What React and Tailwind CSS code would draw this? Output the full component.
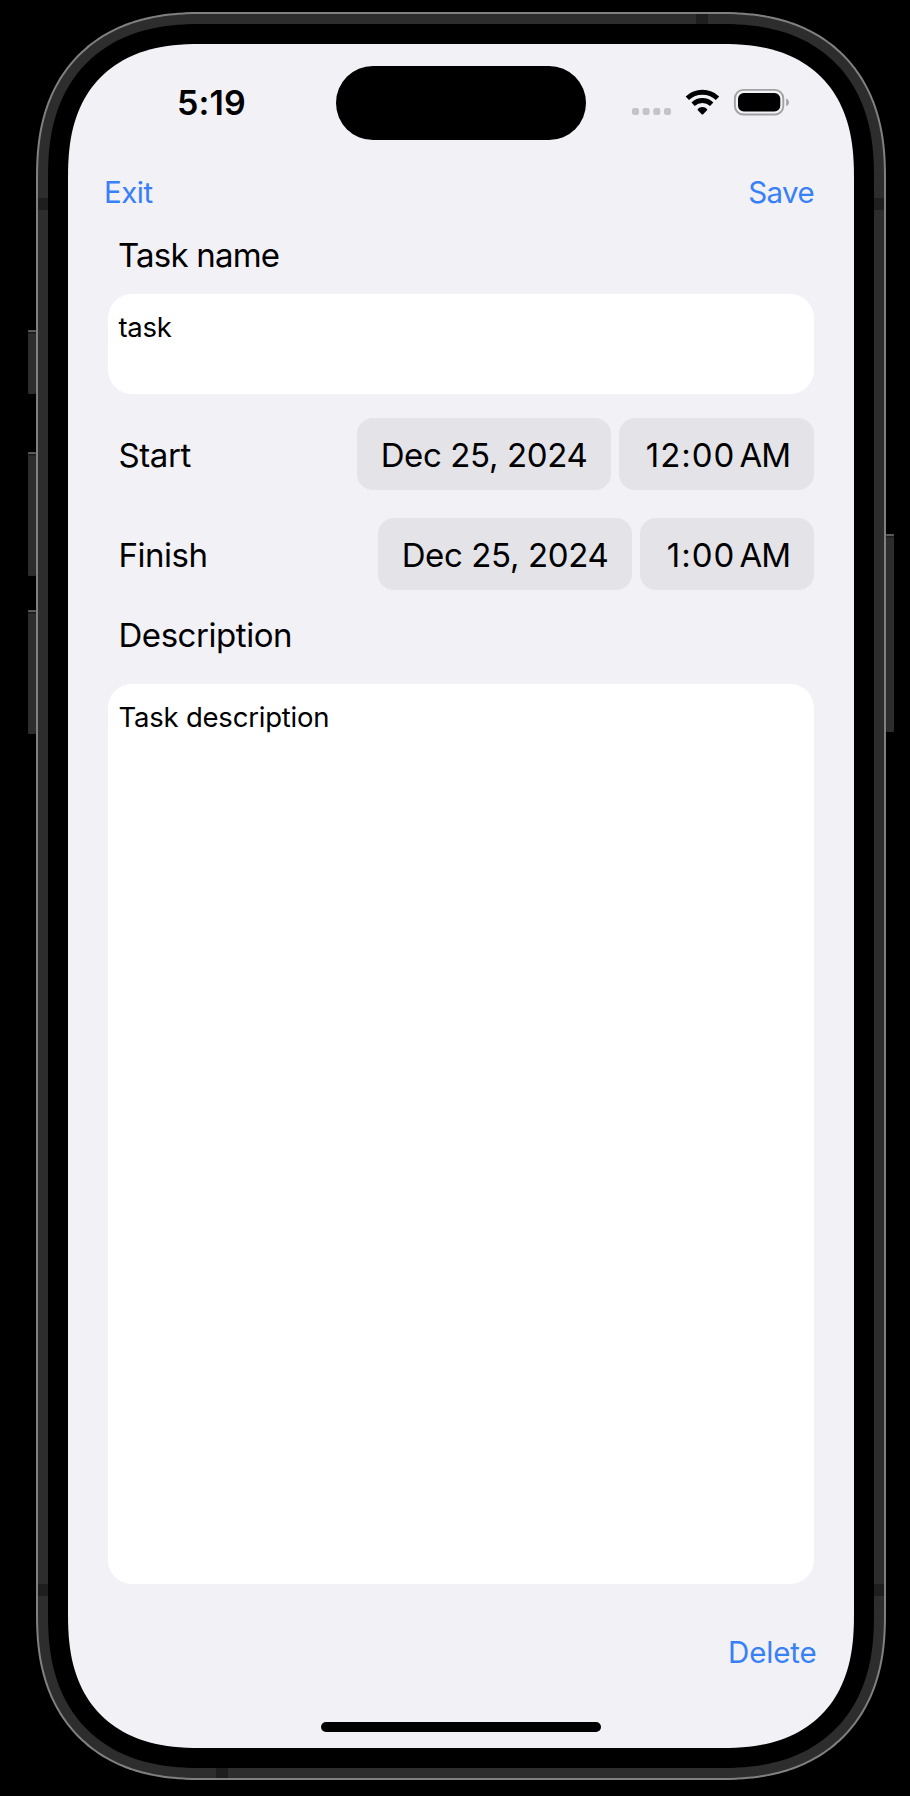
const CORNER_EXTENT = 136;
const CORNER_EXPONENT = 2.5;
const CORNER_STEPS = 40;

// Rectangle outline whose corners follow a superellipse.
function smoothRect(x, y, w, h) {
  const cx = [x + w - CORNER_EXTENT, x + w - CORNER_EXTENT, x + CORNER_EXTENT, x + CORNER_EXTENT];
  const cy = [y + CORNER_EXTENT, y + h - CORNER_EXTENT, y + h - CORNER_EXTENT, y + CORNER_EXTENT];
  const points = [];
  for (let q = 0; q < 4; q++) {
    for (let i = 0; i <= CORNER_STEPS; i++) {
      const t = (i / CORNER_STEPS) * (Math.PI / 2);
      const major = CORNER_EXTENT * Math.pow(Math.abs(Math.cos(t)), 2 / CORNER_EXPONENT);
      const minor = CORNER_EXTENT * Math.pow(Math.abs(Math.sin(t)), 2 / CORNER_EXPONENT);
      const [dx, dy] = [
        [minor, -major],
        [major, minor],
        [-minor, major],
        [-major, -minor],
      ][q];
      points.push(`${(cx[q] + dx).toFixed(2)} ${(cy[q] + dy).toFixed(2)}`);
    }
  }
  return `M${points.join("L")}Z`;
}

const screenOutline = smoothRect(68, 44, 786, 1704);

const sideButtons = [
  { x: 28, y: 330, h: 64 },
  { x: 28, y: 452, h: 124 },
  { x: 28, y: 610, h: 124 },
  { x: 886, y: 534, h: 198 },
];

const antennaBands = [
  { x: 38, y: 198, w: 10, h: 12 },
  { x: 874, y: 198, w: 10, h: 12 },
  { x: 38, y: 1584, w: 10, h: 12 },
  { x: 874, y: 1584, w: 10, h: 12 },
  { x: 696, y: 14, w: 12, h: 10 },
  { x: 216, y: 1768, w: 12, h: 10 },
];

function DeviceFrame() {
  return (
    <svg className="absolute inset-0" width="910" height="1796" viewBox="0 0 910 1796" aria-hidden="true">
      {sideButtons.map((b) => (
        <g key={`${b.x}-${b.y}`}>
          <rect x={b.x} y={b.y} width="8" height={b.h} rx="1.5" fill="#2d2d2d" />
          <rect x={b.x} y={b.y} width="8" height="2" rx="1" fill="#5c5c5c" />
          <rect x={b.x} y={b.y + 2} width="8" height="1.5" fill="#1c1c1c" />
        </g>
      ))}
      <g strokeLinejoin="round">
        <path d={screenOutline} fill="none" stroke="#808080" strokeWidth="64" />
        <path d={screenOutline} fill="none" stroke="#2d2d2d" strokeWidth="60" />
        {antennaBands.map((b) => (
          <rect key={`${b.x}-${b.y}`} x={b.x} y={b.y} width={b.w} height={b.h} fill="#1e1e1e" />
        ))}
        <path d={screenOutline} fill="none" stroke="#000" strokeWidth="40" />
        <path d={screenOutline} fill="#f2f1f6" />
      </g>
    </svg>
  );
}

function StatusIcons() {
  return (
    <svg width="160" height="30" viewBox="632 88 160 30" aria-hidden="true">
      {[632, 642.6, 653.3, 664].map((x) => (
        <rect key={x} x={x} y="108" width="7" height="7" rx="2.2" fill="#c4c4c8" />
      ))}
      <path d="M687.3 98.2A22.3 22.3 0 0 1 717.5 98.2" fill="none" stroke="#000" strokeWidth="4.9" />
      <path d="M693.1 104.2A13.6 13.6 0 0 1 711.7 104.2" fill="none" stroke="#000" strokeWidth="4.8" />
      <path
        d="M697.6 109.4C700.2 106.3 704.6 106.3 707.2 109.4Q707.4 109.8 707 110.2L702.9 114.4Q702.4 114.8 701.9 114.4L697.8 110.2Q697.4 109.8 697.6 109.4Z"
        fill="#000"
      />
      <rect x="734.9" y="89.9" width="48.4" height="24.6" rx="8.4" fill="none" stroke="#a2a2a5" strokeWidth="1.9" />
      <rect x="738" y="93" width="42.3" height="18.5" rx="5.8" fill="#000" />
      <path d="M786.2 98.4C789.8 99.8 789.8 104.8 786.2 106.2Z" fill="#a2a2a5" />
    </svg>
  );
}

function StatusBar() {
  return (
    <div className="grid h-[118px] grid-cols-[1fr_250px_1fr] items-center">
      <div className="pl-[109px] text-[34px] leading-10 font-semibold tracking-[0.1px]">5:19</div>
      <div className="h-[74px] rounded-full bg-black" />
      <div className="flex justify-end pr-[62px]">
        <StatusIcons />
      </div>
    </div>
  );
}

function DateRow({ label, labelClass, hours, timeClass }) {
  return (
    <div className="flex h-[72px] items-center justify-between">
      <div className={`pt-px pl-[10.5px] ${labelClass}`}>{label}</div>
      <div className="flex gap-2">
        <button className="h-[72px] w-[254px] rounded-[16px] bg-[#e4e3e8] pt-px text-center tracking-[-0.37px]">
          Dec 25, 2024
        </button>
        <button
          className={`h-[72px] rounded-[16px] bg-[#e4e3e8] pt-px pr-[24px] text-right tracking-[1px] whitespace-nowrap ${timeClass}`}
        >
          {hours}
          <span className="-ml-px tracking-[-1px]">{"\u202f"}AM</span>
        </button>
      </div>
    </div>
  );
}

export default function App() {
  return (
    <div className="relative h-[1796px] w-[910px] overflow-hidden bg-black px-[68px] pt-11 font-['Inter',sans-serif] text-[33px] leading-10 text-black">
      <DeviceFrame />
      <main className="relative flex h-[1704px] w-[786px] flex-col">
        <StatusBar />

        <nav className="flex h-[60px] items-center justify-between pr-[40px] pl-9 text-[29.5px] text-[#3880f7]">
          <button className="tracking-[-0.5px]">Exit</button>
          <button className="tracking-[-0.6px]">Save</button>
        </nav>

        <div className="flex flex-col px-10">
          <h2 className="mb-1.5 flex h-[66px] items-center pl-[10px] tracking-[-0.8px]">Task name</h2>
          <div className="h-[100px] rounded-[24px] bg-white pt-[12.5px] pl-[10.5px] text-[27.5px] tracking-[-0.3px]">
            task
          </div>

          <div className="mt-6 flex flex-col gap-7">
            <DateRow label="Start" labelClass="tracking-[-0.4px]" hours="12:00" timeClass="w-[195px]" />
            <DateRow label="Finish" labelClass="tracking-[-0.48px]" hours="1:00" timeClass="w-[174px]" />
          </div>

          <h2 className="mb-1.5 flex h-[88px] items-center pt-[2px] pl-[10.5px] tracking-[-0.45px]">Description</h2>
          <div className="h-[900px] rounded-[24px] bg-white pt-[12.5px] pl-[10.5px] text-[27.5px] tracking-[-0.22px]">
            Task description
          </div>
        </div>

        <div className="flex h-[136px] items-center justify-end pr-[37.5px] text-[29.5px] text-[#3880f7]">
          <button className="tracking-[-0.15px]">Delete</button>
        </div>

        <div className="mx-auto mt-0.5 h-[10px] w-[280px] rounded-full bg-black" />
      </main>
    </div>
  );
}
